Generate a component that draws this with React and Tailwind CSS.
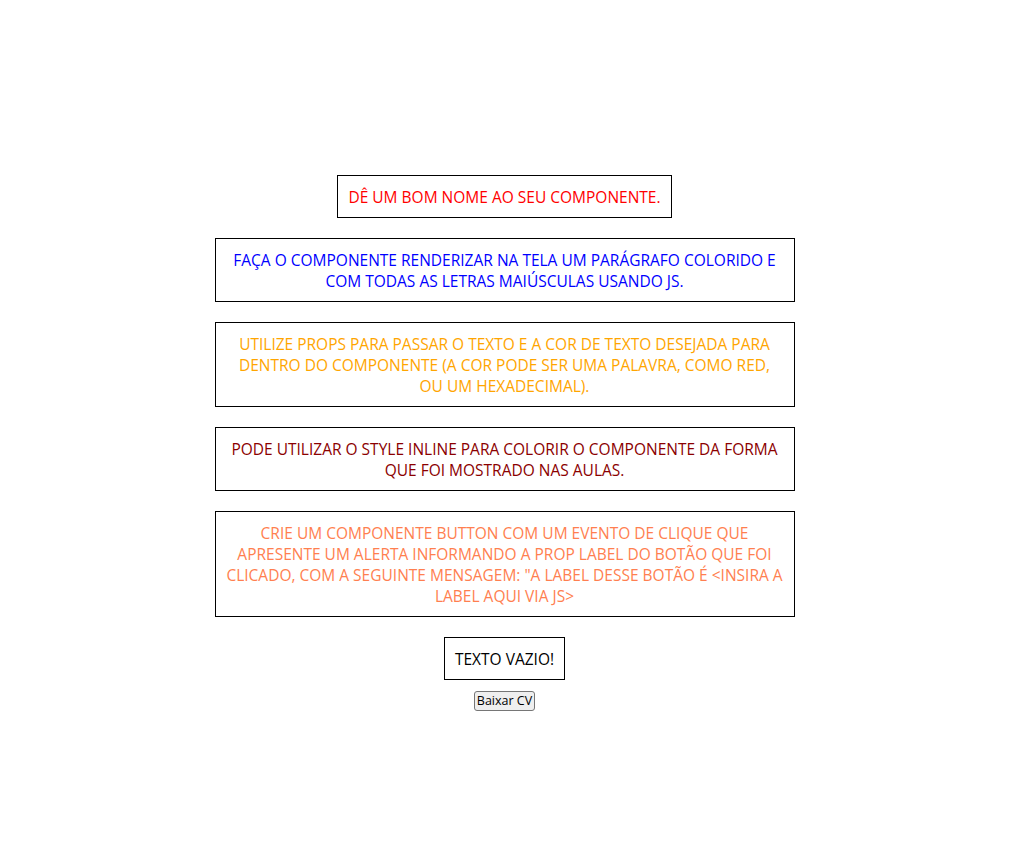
export default function App() {
  const items = [
    { lines: ["Dê um bom nome ao seu componente."], color: "text-[#ff0000]", wide: false },
    { lines: ["Faça o componente renderizar na tela um parágrafo colorido e", "com todas as letras maiúsculas usando JS."], color: "text-[#0000ff]", wide: true },
    { lines: ["Utilize props para passar o texto e a cor de texto desejada para", "dentro do componente (a cor pode ser uma palavra, como red,", "ou um hexadecimal)."], color: "text-[#ffa500]", wide: true },
    { lines: ["Pode utilizar o style inline para colorir o componente da forma", "que foi mostrado nas aulas."], color: "text-[#8b0000]", wide: true },
    { lines: ["Crie um componente Button com um evento de clique que", "apresente um alerta informando a prop label do botão que foi", "clicado, com a seguinte mensagem: \"A label desse botão é <insira a", "label aqui via JS>"], color: "text-[#ff7f50]", wide: true },
    { lines: ["Texto vazio!"], color: "text-black", wide: false },
  ];
  return (
    <div className="min-h-[848px] bg-white flex flex-col items-center pt-[165px] pr-[15px] font-['Open_Sans',sans-serif]">
      {items.map((it, i) => (
        <p
          key={i}
          className={`my-[10px] border border-black px-[10px] pt-[11px] pb-[9px] text-center text-[15.5px] leading-[21px] uppercase ${it.wide ? "w-[580px]" : "max-w-[580px]"} ${it.color}`}
        >
          {it.lines.map((l, j) => (
            <span key={j} className="block whitespace-nowrap">{l}</span>
          ))}
        </p>
      ))}
      <button className="mt-px h-[20px] px-[2px] rounded-[3px] border border-[#767676] bg-[#efefef] text-[12.5px] leading-[16px] text-black font-['Open_Sans',sans-serif]">
        Baixar CV
      </button>
    </div>
  );
}
